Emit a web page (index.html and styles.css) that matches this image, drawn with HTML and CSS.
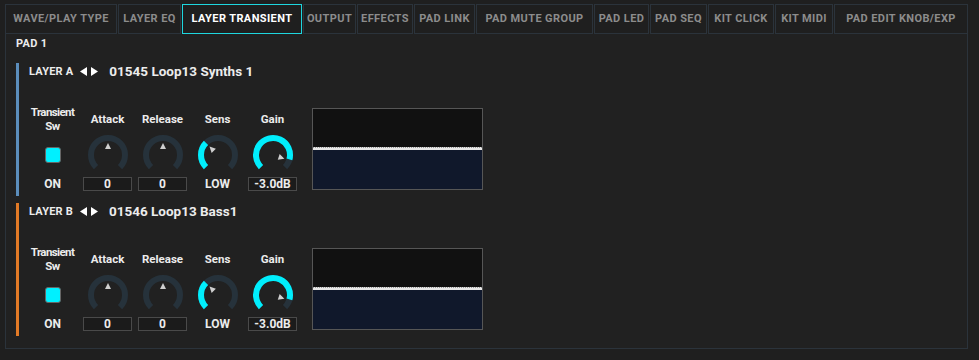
FILE: index.html
```html
<!DOCTYPE html>
<html lang="en">
<head>
  <meta charset="UTF-8">
  <title>Layer Transient</title>
  <link rel="stylesheet" href="styles.css">
</head>
<body>
  <nav class="tabs">
    <div class="tab">WAVE/PLAY TYPE</div>
    <div class="tab">LAYER EQ</div>
    <div class="tab active">LAYER TRANSIENT</div>
    <div class="tab">OUTPUT</div>
    <div class="tab">EFFECTS</div>
    <div class="tab">PAD LINK</div>
    <div class="tab">PAD MUTE GROUP</div>
    <div class="tab">PAD LED</div>
    <div class="tab">PAD SEQ</div>
    <div class="tab">KIT CLICK</div>
    <div class="tab">KIT MIDI</div>
    <div class="tab">PAD EDIT KNOB/EXP</div>
  </nav>

  <div class="panel">
    <div class="pad-title">PAD 1</div>

    <section class="layer layer-a">
      <div class="layer-head">
        <span class="layer-name">LAYER A</span>
        <svg class="arrows" width="18" height="9" viewBox="0 0 18 9"><polygon points="7,0 7,9 0,4.5" fill="#fff"/><polygon points="11,0 11,9 18,4.5" fill="#fff"/></svg>
        <span class="sample">01545 Loop13 Synths 1</span>
      </div>
      <div class="controls">
        <div class="ctl">
          <div class="label narrow">Transient<br>Sw</div>
          <div class="knob-slot"><div class="toggle"></div></div>
          <div class="value plain">ON</div>
        </div>
        <div class="ctl">
          <div class="label">Attack</div>
          <div class="knob-slot">
            <svg width="44" height="44" viewBox="0 0 44 44"><path class="track" d="M9.98 34.02 A17 17 0 1 1 34.02 34.02"/><polygon class="pointer" points="22,10 19,16 25,16"/></svg>
          </div>
          <div class="value">0</div>
        </div>
        <div class="ctl">
          <div class="label">Release</div>
          <div class="knob-slot">
            <svg width="44" height="44" viewBox="0 0 44 44"><path class="track" d="M9.98 34.02 A17 17 0 1 1 34.02 34.02"/><polygon class="pointer" points="22,10 19,16 25,16"/></svg>
          </div>
          <div class="value">0</div>
        </div>
        <div class="ctl">
          <div class="label">Sens</div>
          <div class="knob-slot">
            <svg width="44" height="44" viewBox="0 0 44 44"><path class="track" d="M9.98 34.02 A17 17 0 1 1 34.02 34.02"/><path class="fill" d="M9.98 34.02 A17 17 0 0 1 9.98 9.98"/><polygon class="pointer" points="22,10 19,16 25,16" transform="rotate(-45 22 22)"/></svg>
          </div>
          <div class="value plain">LOW</div>
        </div>
        <div class="ctl">
          <div class="label">Gain</div>
          <div class="knob-slot">
            <svg width="44" height="44" viewBox="0 0 44 44"><path class="track" d="M9.98 34.02 A17 17 0 1 1 34.02 34.02"/><path class="fill" d="M9.98 34.02 A17 17 0 1 1 38.42 26.4"/><polygon class="pointer" points="22,10 19,16 25,16" transform="rotate(108 22 22)"/></svg>
          </div>
          <div class="value">-3.0dB</div>
        </div>
        <div class="graph">
          <div class="graph-top"></div>
          <div class="graph-line"></div>
          <div class="graph-bottom"></div>
        </div>
      </div>
    </section>

    <section class="layer layer-b">
      <div class="layer-head">
        <span class="layer-name">LAYER B</span>
        <svg class="arrows" width="18" height="9" viewBox="0 0 18 9"><polygon points="7,0 7,9 0,4.5" fill="#fff"/><polygon points="11,0 11,9 18,4.5" fill="#fff"/></svg>
        <span class="sample">01546 Loop13 Bass1</span>
      </div>
      <div class="controls">
        <div class="ctl">
          <div class="label narrow">Transient<br>Sw</div>
          <div class="knob-slot"><div class="toggle"></div></div>
          <div class="value plain">ON</div>
        </div>
        <div class="ctl">
          <div class="label">Attack</div>
          <div class="knob-slot">
            <svg width="44" height="44" viewBox="0 0 44 44"><path class="track" d="M9.98 34.02 A17 17 0 1 1 34.02 34.02"/><polygon class="pointer" points="22,10 19,16 25,16"/></svg>
          </div>
          <div class="value">0</div>
        </div>
        <div class="ctl">
          <div class="label">Release</div>
          <div class="knob-slot">
            <svg width="44" height="44" viewBox="0 0 44 44"><path class="track" d="M9.98 34.02 A17 17 0 1 1 34.02 34.02"/><polygon class="pointer" points="22,10 19,16 25,16"/></svg>
          </div>
          <div class="value">0</div>
        </div>
        <div class="ctl">
          <div class="label">Sens</div>
          <div class="knob-slot">
            <svg width="44" height="44" viewBox="0 0 44 44"><path class="track" d="M9.98 34.02 A17 17 0 1 1 34.02 34.02"/><path class="fill" d="M9.98 34.02 A17 17 0 0 1 9.98 9.98"/><polygon class="pointer" points="22,10 19,16 25,16" transform="rotate(-45 22 22)"/></svg>
          </div>
          <div class="value plain">LOW</div>
        </div>
        <div class="ctl">
          <div class="label">Gain</div>
          <div class="knob-slot">
            <svg width="44" height="44" viewBox="0 0 44 44"><path class="track" d="M9.98 34.02 A17 17 0 1 1 34.02 34.02"/><path class="fill" d="M9.98 34.02 A17 17 0 1 1 38.42 26.4"/><polygon class="pointer" points="22,10 19,16 25,16" transform="rotate(108 22 22)"/></svg>
          </div>
          <div class="value">-3.0dB</div>
        </div>
        <div class="graph">
          <div class="graph-top"></div>
          <div class="graph-line"></div>
          <div class="graph-bottom"></div>
        </div>
      </div>
    </section>
  </div>
</body>
</html>
```

FILE: styles.css
```css
html, body {
  height: 100%;
}
body {
  margin: 0;
  padding: 4px 0 0 5px;
  box-sizing: border-box;
  background-color: #1f1f1f;
  font-family: Roboto, 'Liberation Sans', sans-serif;
  font-weight: 700;
  color: #ececec;
  overflow: hidden;
}

/* tab strip */
.tabs {
  display: flex;
  gap: 1px;
  width: 963px;
}
.tab {
  height: 28px;
  line-height: 28px;
  box-sizing: content-box;
  border: 1px solid #2b333b;
  font-size: 11px;
  letter-spacing: 0.4px;
  color: #8c8c8c;
  text-align: center;
  white-space: nowrap;
}
.tab:nth-child(1) { width: 110px; }
.tab:nth-child(2) { width: 61px; }
.tab:nth-child(3) { width: 118px; }
.tab:nth-child(4) { width: 51px; }
.tab:nth-child(5) { width: 54px; }
.tab:nth-child(6) { width: 59px; }
.tab:nth-child(7) { width: 115px; }
.tab:nth-child(8) { width: 53px; }
.tab:nth-child(9) { width: 55px; }
.tab:nth-child(10) { width: 64px; }
.tab:nth-child(11) { width: 56px; }
.tab:nth-child(12) { flex: 1; }
.tab.active {
  border-color: #1ed6df;
  color: #ffffff;
}

/* pad panel */
.panel {
  width: 963px;
  height: 315px;
  box-sizing: border-box;
  border: 1px solid #2b333b;
  border-top: none;
  background-color: #212121;
  padding: 3px 0 0 10px;
}
.pad-title {
  font-size: 11px;
  letter-spacing: 0.3px;
  line-height: 14px;
  margin-bottom: 12px;
}
.layer {
  height: 133px;
  box-sizing: border-box;
  border-left: 3px solid #5b8dbb;
  margin-bottom: 7px;
}
.layer-b {
  border-left-color: #e27a26;
}
.layer-head {
  display: flex;
  align-items: center;
  height: 16px;
  padding-left: 10px;
}
.layer-name {
  font-size: 11px;
  letter-spacing: 0.2px;
}
.arrows {
  margin: 0 11px 0 7px;
}
.sample {
  font-size: 13.5px;
}

/* knobs row */
.controls {
  display: flex;
  align-items: flex-start;
  margin: 26px 0 0 6px;
}
.ctl {
  width: 55px;
  display: flex;
  flex-direction: column;
  align-items: center;
}
.label {
  height: 28px;
  display: flex;
  align-items: center;
  text-align: center;
  font-size: 11.5px;
  line-height: 14px;
}
.label.narrow {
  letter-spacing: -0.6px;
}
.knob-slot {
  height: 44px;
  display: flex;
  align-items: center;
  justify-content: center;
}
.knob-slot svg {
  display: block;
}
.track {
  fill: none;
  stroke: #26323b;
  stroke-width: 6;
}
.fill {
  fill: none;
  stroke: #00eefc;
  stroke-width: 6;
}
.pointer {
  fill: #cfcfcf;
}
.toggle {
  width: 14px;
  height: 14px;
  border: 1px solid #666;
  border-radius: 3px;
  background-color: #00f0ff;
}
.value {
  width: 49px;
  height: 14px;
  box-sizing: border-box;
  border: 1px solid #4a4a4a;
  background-color: #1b1b1b;
  font-size: 12px;
  line-height: 12px;
  text-align: center;
}
.value.plain {
  border-color: transparent;
  background: none;
}

/* transient graph */
.graph {
  width: 171px;
  height: 82px;
  box-sizing: border-box;
  border: 1px solid #565656;
  margin: 3px 0 0 12px;
  display: flex;
  flex-direction: column;
}
.graph-top {
  height: 38px;
  background-color: #111111;
}
.graph-line {
  height: 2px;
  background-color: #e8e8e8;
  border-top: 1px dotted #9a9a9a;
}
.graph-bottom {
  flex: 1;
  background-color: #10182b;
}
```
